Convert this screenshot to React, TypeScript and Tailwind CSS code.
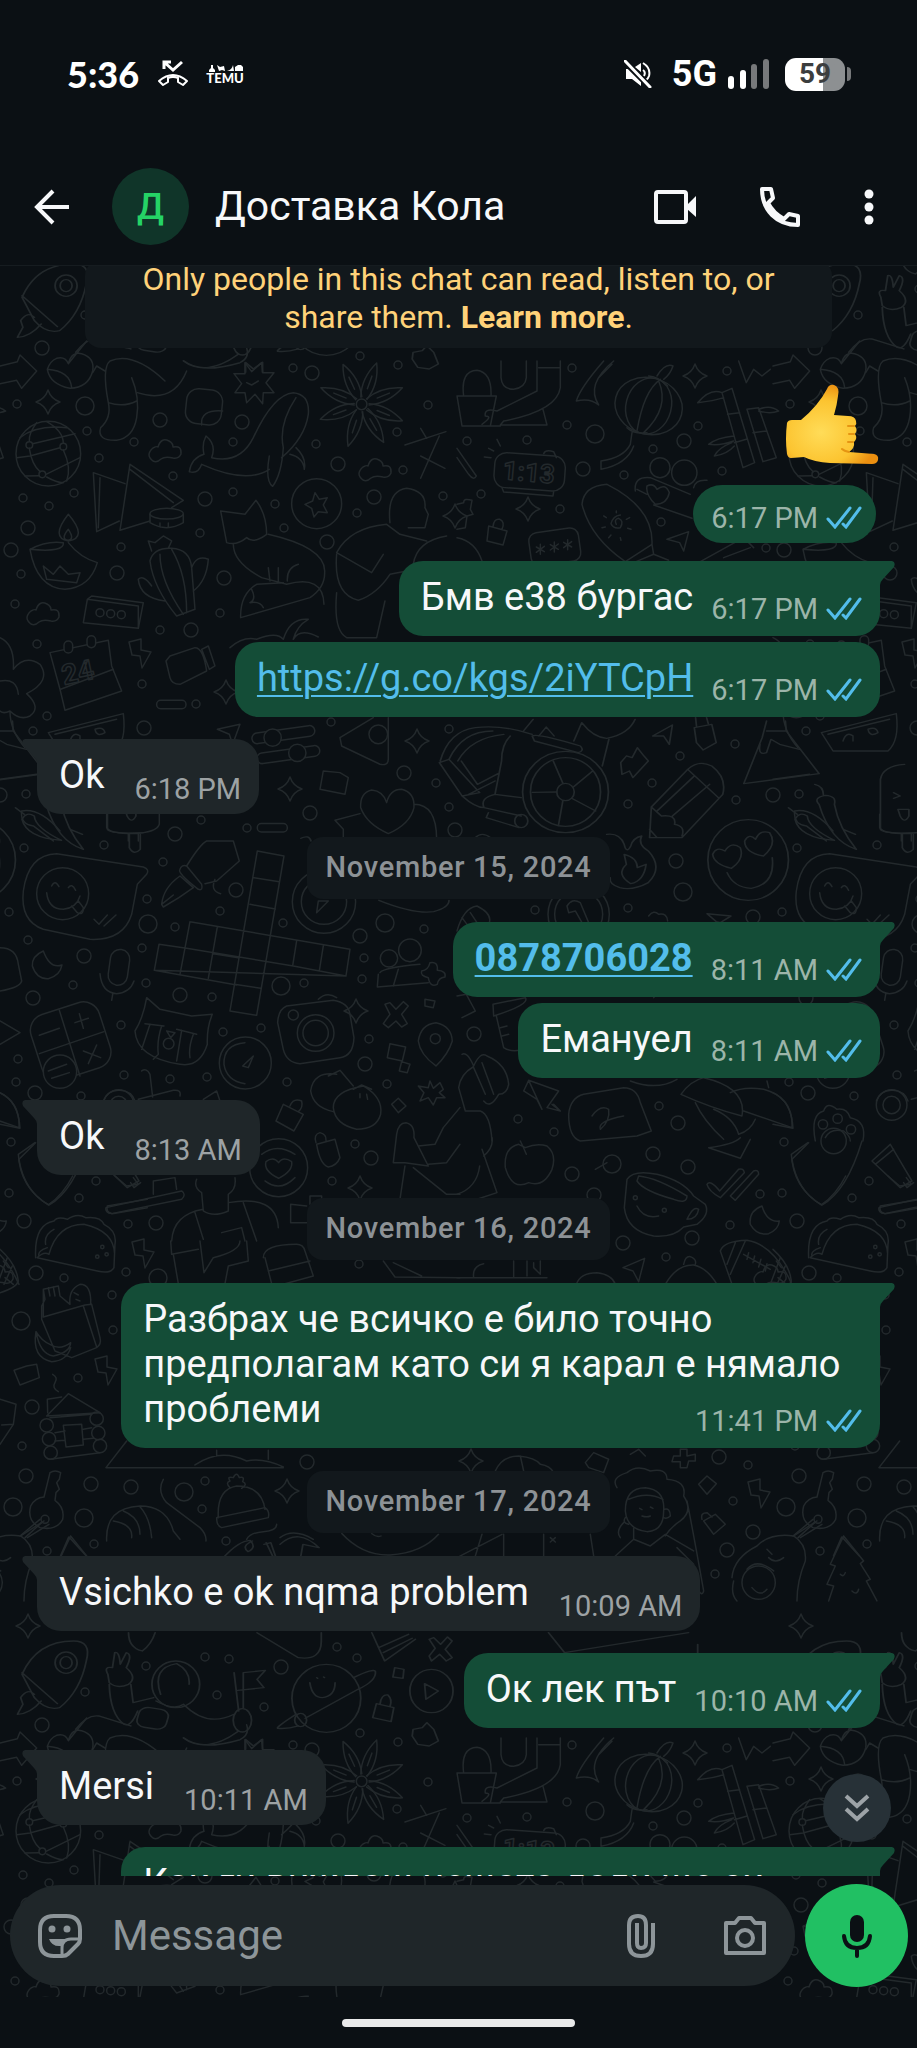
import { useState } from "react";
import type { ReactNode } from "react";

type Message = {
  id: number;
  from: "me" | "them";
  time: string;
  content: ReactNode;
  tail?: boolean;
  long?: boolean;
};

type Day = {
  date?: string;
  messages: Message[];
};

const days: Day[] = [
  {
    messages: [
      { id: 1, from: "me", time: "6:17 PM", content: "Бмв е38 бургас", tail: true },
      {
        id: 2,
        from: "me",
        time: "6:17 PM",
        content: (
          <a href="https://g.co/kgs/2iYTCpH" className="text-[#53bdeb] underline decoration-2 underline-offset-4">
            https://g.co/kgs/2iYTCpH
          </a>
        ),
      },
      { id: 3, from: "them", time: "6:18 PM", content: "Ok", tail: true },
    ],
  },
  {
    date: "November 15, 2024",
    messages: [
      {
        id: 4,
        from: "me",
        time: "8:11 AM",
        tail: true,
        content: (
          <a href="tel:0878706028" className="font-bold text-[#53bdeb] underline decoration-2 underline-offset-4">
            0878706028
          </a>
        ),
      },
      { id: 5, from: "me", time: "8:11 AM", content: "Емануел" },
      { id: 6, from: "them", time: "8:13 AM", content: "Ok", tail: true },
    ],
  },
  {
    date: "November 16, 2024",
    messages: [
      {
        id: 7,
        from: "me",
        time: "11:41 PM",
        content: "Разбрах че всичко е било точно предполагам като си я карал е нямало проблеми",
        tail: true,
        long: true,
      },
    ],
  },
  {
    date: "November 17, 2024",
    messages: [
      { id: 8, from: "them", time: "10:09 AM", content: "Vsichko e ok nqma problem", tail: true },
      { id: 9, from: "me", time: "10:10 AM", content: "Ок лек път", tail: true },
      { id: 10, from: "them", time: "10:11 AM", content: "Mersi", tail: true },
      { id: 11, from: "me", time: "10:12 AM", content: "Как ги виждаш нещата дали ще си", tail: true, long: true },
    ],
  },
];

/* Wallpaper */

const smallDots = [
  [17, 403], [87, 430], [134, 441], [99, 457], [173, 475], [233, 441], [293, 367], [360, 355], [398, 364],
  [428, 404], [397, 431], [316, 443], [403, 469], [23, 497], [74, 492], [49, 505], [233, 491], [275, 503],
  [357, 512], [443, 495], [200, 532], [284, 527], [121, 546], [21, 573], [15, 603], [220, 612], [160, 629],
  [37, 643], [142, 683], [196, 703], [47, 715], [33, 730], [331, 721], [449, 728], [436, 782], [247, 827],
  [26, 793], [201, 819], [24, 847], [104, 844], [163, 861], [147, 898], [220, 910], [175, 926], [9, 911],
  [28, 939], [142, 947], [73, 984], [146, 982], [212, 996], [121, 1024], [223, 1031], [261, 1027], [304, 982],
  [283, 922], [424, 928], [364, 957], [362, 978], [369, 1038], [387, 1083], [287, 1081], [207, 1076],
  [170, 1078], [124, 1074], [81, 1095], [18, 1058], [16, 1081], [11, 1141], [9, 1192], [96, 1180], [79, 1197],
  [128, 1223], [355, 1143], [332, 1180], [572, 367], [567, 424], [527, 439], [467, 440], [653, 448],
  [698, 425], [727, 370], [624, 474], [722, 470], [481, 493], [560, 508], [661, 521], [766, 547], [535, 909],
  [628, 907], [659, 1105], [518, 1118], [554, 1131], [760, 1193], [730, 1224], [666, 1256], [748, 1464],
  [733, 1500], [715, 1573], [64, 1277], [126, 1271], [112, 1294], [113, 1329], [78, 1377], [22, 1445],
  [205, 1480], [202, 1508], [359, 1263], [47, 1550], [94, 1543], [226, 1540], [205, 1656], [229, 1658],
  [337, 1646], [357, 1657], [217, 1694], [264, 1706], [85, 1691], [146, 1665], [449, 806], [628, 803],
  [652, 782], [680, 755], [735, 743], [736, 799],
];

const mediumDots = [
  [42, 347], [160, 419], [242, 421], [312, 372], [338, 463], [205, 498], [374, 496], [28, 527], [327, 541],
  [11, 549], [117, 572], [224, 577], [191, 629], [144, 727], [404, 772], [310, 812], [175, 833], [236, 889],
  [84, 955], [180, 994], [33, 997], [360, 935], [365, 1063], [35, 1092], [24, 1220], [156, 1222], [371, 1157],
  [684, 440], [583, 468], [753, 916], [678, 1122], [572, 1173], [653, 1153], [688, 1166], [594, 1194],
  [623, 1242], [692, 1237], [719, 1456], [753, 1531], [727, 1549], [36, 1272], [32, 1406], [26, 1475],
  [91, 1483], [131, 1486], [307, 1461], [281, 1666], [455, 829], [676, 860], [773, 794], [474, 1033],
];

const bigDots = [
  [85, 405], [148, 923], [281, 985], [385, 922], [595, 433], [683, 891], [612, 1163], [158, 1277], [21, 1320],
  [13, 1506], [84, 1517], [184, 1491],
];

const sparkles = [
  [48, 401], [528, 508], [695, 375], [226, 691], [417, 740], [290, 788], [356, 1010], [360, 1187], [287, 1490],
  [471, 1460], [28, 1625], [455, 515],
];

const clouds = [
  [165, 450], [375, 469], [43, 613], [770, 1275],
];

const bolts = [
  [140, 651], [143, 1251], [106, 1368], [759, 1491],
];

const petals = [20, 68, 112, 150, 198, 250, 292, 335];

function Doodles() {
  return (
    <g id="doodles" fill="none" stroke="#23292c" strokeLinecap="round" strokeLinejoin="round" strokeWidth="1.5">
      {smallDots.map(([x, y]) => (
        <circle key={`${x}-${y}`} cx={x} cy={y} r="4" />
      ))}
      {mediumDots.map(([x, y]) => (
        <circle key={`${x}-${y}`} cx={x} cy={y} r="7" />
      ))}
      {bigDots.map(([x, y]) => (
        <circle key={`${x}-${y}`} cx={x} cy={y} r="9" />
      ))}
      {sparkles.map(([x, y]) => (
        <path key={`${x}-${y}`} transform={`translate(${x} ${y})`} d="M0-12Q3-3 12 0Q3 3 0 12Q-3 3-12 0Q-3-3 0-12Z" />
      ))}
      {clouds.map(([x, y]) => (
        <path
          key={`${x}-${y}`}
          transform={`translate(${x} ${y})`}
          d="M-12 10Q-20 4-12-3Q-8-5-7-4Q-4-14 4-10Q8-8 8-4Q17-6 16 3Q14 8 8 7Q0 5-4 8Q-8 12-12 10Z"
        />
      ))}
      {bolts.map(([x, y]) => (
        <path key={`${x}-${y}`} transform={`translate(${x} ${y})`} d="M-11-10 1-13 1-2 11 0 2 16 0 4-8 3Z" />
      ))}

      {/* globe, astronaut leg, whale, flower */}
      <g transform="translate(0 340) scale(0.3333)" strokeWidth="4.5">
        <circle cx="145" cy="338" r="97" />
        <circle cx="88" cy="312" r="10" />
        <circle cx="190" cy="317" r="10" />
        <circle cx="127" cy="400" r="10" />
        <path d="M60 290Q110 250 200 260M98 308 225 278M88 322Q95 370 120 392M180 320 90 345 50 350M190 327Q215 380 200 420M138 400 240 350M110 245Q85 280 88 300M140 242Q190 270 190 307M118 404 75 405M140 408Q170 425 190 425" />
        <path d="M142 85Q150 60 170 52Q195 45 205 68Q215 30 245 38Q285 50 278 90Q265 140 210 142Q150 130 142 85ZM142 85Q210 90 215 140M205 68 260 0" />
        <path d="M0 75 52 62 60 42 110 90 65 142 50 118 0 128" />
        <path d="M560 90Q520 190 412 155M395 110Q420 170 410 230Q400 290 350 298Q290 300 302 260Q335 230 325 185Q305 80 330 60Q400 30 495 120M325 185Q370 200 410 180M550 60Q600 100 720 65Q750 50 740 20M278 95 290 75 315 90" />
        <rect x="558" y="145" width="108" height="105" rx="35" transform="rotate(6 612 198)" />
        <path d="M605 252Q600 205 668 210" />
        <path d="M735 65 755 92 785 65 788 95 822 95 798 125 822 155 790 155 788 188 765 160 740 185 735 155 705 155 725 128 702 98 735 98ZM740 125 755 132 775 120" />
        <path d="M568 392Q575 350 612 340Q605 310 618 285Q650 310 635 350Q720 370 760 290Q820 160 880 155Q930 160 925 220Q915 290 845 350M568 392Q595 400 605 370Q740 430 808 385M808 345Q795 420 818 436Q845 400 850 320Q835 250 888 170M870 340Q910 350 913 385Q920 350 888 320" />
        <circle cx="1085" cy="190" r="16" />
        {petals.map((angle) => (
          <path
            key={angle}
            transform={`translate(1085 190) rotate(${angle})`}
            d="M-10-20Q-28-75 0-132Q28-75 10-20M0-50V-90"
          />
        ))}
        <path d="M1215 312 1338 272M1262 262 1280 292M1318 285 1262 412M1262 345 1335 382" />
        <path d="M280 395 375 428M280 395 290 572 358 540M390 370 360 568 450 540M390 370 550 478 515 500M390 385 520 485M300 410 295 560" />
        <ellipse cx="500" cy="518" rx="50" ry="16" />
        <path d="M450 520V545Q500 575 550 545V520M480 546V558M505 546V558" />
        <path d="M90 625Q140 598 190 605Q195 635 90 625Q110 740 195 745Q270 740 292 665Q240 650 205 605M205 520Q150 590 205 600Q265 590 205 520ZM205 565Q180 595 205 598Q225 595 205 565ZM130 675 140 715 230 725 240 695 205 700 180 675 160 700Z" />
        <path d="M450 660Q460 620 515 622Q570 625 575 680L585 805 530 825Q460 740 450 660ZM480 640Q480 720 550 820M515 625Q560 700 560 815M575 680Q590 640 625 655Q620 720 580 750M455 735Q430 700 415 715Q420 770 495 780M455 630 445 600 465 605 490 585 515 600 505 622" />
        <circle cx="950" cy="488" r="75" />
        <path d="M945 455 958 475 982 470 970 492 982 515 955 512 942 528 935 502 915 490 938 480Z" />
        <path d="M662 510 735 520 768 478Q800 520 800 580Q760 610 740 590Q710 615 680 605ZM700 610Q700 665 785 710L860 730Q970 700 972 790M805 580Q980 620 974 695Q975 740 930 770L722 830Q720 760 770 730L850 725M755 745Q770 775 750 785 780 780 790 800M805 680 810 720M835 680 835 720M862 720Q860 680 895 670" />
        <path d="M1010 635Q1050 560 1160 550L1200 580 1280 600M1010 635 1115 695 1150 640M1170 545Q1160 450 1220 442Q1280 450 1275 500L1285 520 1275 560 1225 560M1010 640Q1000 760 1075 778Q1130 760 1170 700L1220 690M1010 755Q1000 870 1040 890L1130 890 1155 780M1240 670Q1250 600 1340 585" />
        <path d="M262 775 275 765 430 785 415 862 250 845ZM262 775 415 795 415 862" />
        <circle cx="300" cy="815" r="12" />
        <circle cx="332" cy="818" r="12" />
        <circle cx="364" cy="821" r="12" />
        <path d="M150 935 325 898 335 975 365 1050 195 1108 180 1045ZM182 1045 340 985" />
        <rect x="192" y="900" width="26" height="36" rx="13" fill="#0b1014" />
        <rect x="261" y="884" width="26" height="36" rx="13" fill="#0b1014" />
        <path d="M510 945 585 920Q610 920 620 990L540 1030Q515 1030 510 1010L498 960ZM605 925 625 915 645 975 628 985Z" />
        <rect x="470" y="1078" width="88" height="25" rx="12" />
        <rect x="772" y="1448" width="90" height="25" rx="12" />
        <path d="M145 1175 370 1118Q380 1200 345 1230L180 1230ZM165 1180 350 1135M210 1200Q220 1170 240 1185V1200M285 1165Q310 1155 315 1175 290 1190 285 1165" />
        <path d="M652 1165 720 1150 698 1210 688 1180Z" />
        <rect x="755" y="1165" width="190" height="32" rx="16" transform="rotate(-8 850 1180)" />
        <rect x="770" y="1225" width="190" height="32" rx="16" transform="rotate(-8 865 1240)" />
        <circle cx="818" cy="1190" r="26" fill="#0b1014" />
        <circle cx="892" cy="1236" r="26" fill="#0b1014" />
        <path d="M1120 1130 1020 1190 1025 1215 1140 1270Q1165 1275 1165 1255V1130" />
        <circle cx="1135" cy="1180" r="28" />
        <path d="M970 1290 1020 1295 1045 1310 1035 1360 960 1345Z" />
        <path d="M1160 1385Q1170 1345 1205 1345Q1245 1355 1242 1400 1230 1450 1165 1478 1100 1450 1082 1400 1080 1355 1115 1347 1150 1350 1160 1385ZM1242 1390Q1310 1390 1310 1495M1080 1418 1005 1438 1030 1465V1495" />
        <path d="M0 890Q45 910 40 985 75 940 120 970 155 1020 80 1058 125 1100 90 1125 60 1140 30 1110 10 1120 0 1110M0 1020Q50 1010 55 1060M30 1110Q30 1170 75 1220M0 1315 110 1300" />
        <path d="M320 1420V1460Q330 1478 400 1478 470 1475 478 1450V1420M385 1478V1500M415 1478V1500M65 1410Q60 1450 100 1455L160 1500M65 1410Q120 1400 180 1470" />
        <path d="M690 920Q730 885 770 895 830 870 850 895 870 830 925 835 890 855 880 895 900 860 955 888" />
      </g>

      {/* gardener, lantern, bamboo, alarm clock, surfboard */}
      <g transform="translate(457 360) scale(0.3333)" strokeWidth="4.5">
        <path d="M0 105H118L100 195H15ZM20 105Q10 30 60 28 105 35 102 105M132 0V50Q135 85 170 85 205 80 208 50V0M240 0V90L120 150Q80 140 85 165 110 165 75 190M310 0V80Q300 150 140 180L130 192H270L258 145M245 20H308M15 195H130" />
        <path d="M440 0Q370 80 358 120 400 110 425 132 385 70 470 0M425 50 465 10" />
        <ellipse cx="575" cy="135" rx="102" ry="85" transform="rotate(15 575 135)" />
        <ellipse cx="575" cy="135" rx="68" ry="85" transform="rotate(15 575 135)" />
        <path d="M610 55Q560 90 540 210M605 60Q640 140 560 215M575 45Q600 45 632 75M600 45Q625 5 648 15 640 40 620 55M510 200Q530 220 570 215M525 215 520 250Q500 290 432 300V325Q510 310 530 255" />
        <path d="M795 95 825 82 893 305 858 320ZM812 160 848 155M832 245 868 235M870 145 905 140 958 290 918 302ZM888 215 930 210M795 95Q760 80 722 125 770 120 800 110M905 145Q940 130 965 150 940 160 905 150M830 225Q780 230 755 250 790 255 830 240M825 245Q785 260 772 285 810 280 832 255" />
        <path d="M845 0 868 65 890 25 915 45 940 25" />
        <rect x="112" y="280" width="212" height="105" rx="35" transform="rotate(4 218 332)" />
        <path d="M135 380 140 393 288 405 290 392M260 278Q265 265 290 272L298 290M120 235 130 255M95 262 110 270M82 288 102 290M0 262 58 345Q50 360 35 340L0 290" />
        <path d="M375 430Q380 375 450 370 590 440 585 550L505 602Q400 530 375 430ZM585 550 590 580 530 605M590 580 635 598" />
        <path d="M478 490Q470 475 485 472 502 480 490 500 470 505 462 488 468 465 490 462M478 450V455M440 465 448 470M435 500 445 498M455 530 462 522M492 538 490 530M522 505 512 502M518 470 508 475" />
        <circle cx="609" cy="320" r="30" />
        <circle cx="682" cy="335" r="38" />
        <path d="M535 390Q530 345 580 350L700 400M540 385 570 400M600 385Q625 365 637 395 630 430 595 430 565 400 570 375 590 365 600 385ZM590 432 705 472M710 380Q715 355 750 358" />
        <path d="M95 495 150 510 138 552 90 540ZM108 497Q110 472 128 475 145 482 135 505" />
        <rect x="218" y="508" width="150" height="100" rx="25" transform="rotate(-8 290 555)" />
        <path d="M250 550V580M238 558 262 572M262 556 238 574M292 543V573M280 551 304 565M304 549 280 567M332 536V566M320 544 344 558M344 542 320 560" />
        <path d="M0 430 20 425Q20 410 45 418L40 445 48 460 30 465 25 500 0 505M0 530Q55 540 75 600M630 535 695 512 680 570 668 545ZM730 602 860 530 890 560M800 590 880 560" />
      </g>

      {/* chat bubble, pen, crossword, calculator, cat, cameras */}
      <g transform="translate(0 840) scale(0.3333)" strokeWidth="4.5">
        <path d="M170 38 430 78Q450 85 440 100L412 130 395 220Q370 300 270 295L130 265Q60 240 70 150 85 40 170 38Z" />
        <circle cx="188" cy="158" r="78" />
        <path d="M140 155Q145 205 190 205 230 200 240 165M155 135Q165 115 177 137M205 140Q215 125 227 148M215 195 232 215Q250 225 250 200L235 180M282 235 297 250 322 222M312 255 348 222" />
        <path d="M485 190Q490 140 540 105L580 140Q540 170 490 198ZM540 85Q530 95 595 145 610 150 605 130L560 75Q545 70 540 85ZM560 75Q600 10 620 0H700L718 60 650 120 615 128M485 190 520 162M645 115Q630 150 662 158" />
        {/* crossword grid */}
        <path d="M772 30 852 45 770 523 690 510ZM762 110 838 122M750 190 826 204M570 242 1050 325 1038 405 463 388 477 310 560 322M570 242 540 400M652 258 625 412M890 300 878 375M970 315 958 390M715 350 640 338M703 430 782 442M463 388 710 432M560 322 880 375 1038 405" />
        <path d="M130 330Q95 345 97 375 110 415 145 413 180 405 186 372 150 385 130 330Z" />
        <rect x="328" y="325" width="58" height="108" rx="29" transform="rotate(8 357 378)" />
        <path d="M300 398Q305 455 350 458 390 455 402 420M338 460 335 478" />
        <rect x="105" y="498" width="215" height="205" rx="50" transform="rotate(-18 212 602)" />
        <path d="M178 508 240 705M118 638 312 572M118 583 178 562M225 545 265 532M238 518 250 562M250 630 302 650M290 612 265 668" />
        <circle cx="180" cy="692" r="50" fill="#0b1014" />
        <path d="M145 690 200 670M155 712 208 695" />
        <path d="M440 470 480 505 575 525 637 520Q620 560 622 610 600 680 540 670 410 650 405 570 430 530 440 470ZM435 548 492 555M450 550 425 625M485 555Q470 600 475 640L460 655M530 565 590 580M545 568 530 660M580 580Q565 620 570 650M500 570 525 575 512 590Z" />
        <circle cx="506" cy="608" r="16" />
        <circle cx="736" cy="666" r="78" />
        <path d="M735 605Q670 610 672 670 680 720 735 728M728 675 760 645 745 680Z" />
        <circle cx="972" cy="182" r="95" />
        <circle cx="972" cy="182" r="68" />
        <path d="M950 215 955 180 985 180Z" />
        <path d="M860 495 1000 478Q1045 485 1050 520L1062 590Q1060 645 1020 650L900 668Q860 665 850 625L833 545Q835 505 860 495ZM955 475Q980 450 1010 470" />
        <circle cx="947" cy="576" r="55" />
        <circle cx="947" cy="576" r="38" />
        <circle cx="880" cy="522" r="15" />
        <circle cx="1167" cy="352" r="26" />
        <circle cx="1230" cy="328" r="34" />
        <path d="M1140 395Q1150 380 1260 370M1135 400 1132 438 1285 425M1195 385 1180 435M1290 365Q1315 360 1312 388 1340 390 1335 408 1315 410 1312 430 1290 440 1285 410 1260 405 1265 390 1285 388 1290 365Z" />
        <path d="M1155 490 1170 485 1188 505 1210 482 1225 495 1205 520 1222 548 1205 558 1188 540 1165 560 1150 548 1170 520ZM1275 475 1305 480 1300 500 1275 495Z" />
        <path d="M1308 545Q1355 555 1357 600 1345 640 1308 675 1260 640 1255 600 1262 550 1308 545Z" />
        <circle cx="1306" cy="593" r="15" />
        <path d="M1170 608 1217 618 1207 660 1162 650ZM1205 662 1230 670 1222 695 1198 690ZM1290 720 1300 742 1320 725 1330 745 1318 755 1335 770 1310 770 1300 792 1285 770 1260 780 1272 755 1255 735 1285 740Z" />
        <path d="M1010 700Q940 690 932 750 940 800 1000 812M985 705 1020 688 1060 735M1000 800Q1000 750 1090 735 1150 770 1142 820 1130 865 1070 865 1005 850 1000 800ZM1060 745 1085 732 1115 745M1080 758V770M1100 760 1103 775" />
        <path d="M850 790 910 820 882 870 828 840ZM870 795Q880 770 905 780 910 800 895 812M1175 790 1195 772 1218 795 1195 815ZM950 910 1005 895 1020 950Q1010 975 985 978 960 970 950 910ZM948 905Q940 880 960 875 980 880 978 898" />
        <circle cx="836" cy="980" r="87" />
        <path d="M836 965Q850 945 875 962 880 990 836 1012 790 990 798 962 820 945 836 965ZM785 940Q830 905 885 940M795 1020Q840 1055 885 1010" />
        <path d="M425 690Q440 680 450 700L458 768M415 775 520 748Q545 745 540 765M310 780Q325 745 360 748 395 750 405 780M610 775 650 750 660 780" />
        <path d="M318 1100 545 1050Q560 1060 545 1075L335 1118Q315 1115 318 1100ZM460 1060V1020L525 1010 530 1045M345 1005 380 1035 415 1030 400 1010M55 940Q60 1040 145 1092 190 1060 218 1005M55 940 105 905M0 755Q55 780 60 862L0 850" />
        <path d="M590 1015Q580 1040 605 1055L610 1110Q640 1130 685 1110V1060Q710 1045 705 1010M515 1200Q520 1120 610 1105M685 1085Q830 1060 835 1160M585 1115 610 1195M730 1085 770 1200M665 1175 725 1160 735 1200" />
        <path d="M872 1090 920 1095M872 1090V1145H920M930 1090V1065H965V1078" />
        <path d="M1190 880Q1195 845 1218 845 1245 850 1242 890L1285 975 1215 965 1180 965ZM1255 915 1305 910 1330 860 1380 800M1285 970 1340 965 1380 910M1240 980 1340 1060 1380 1060M1200 1075 1215 975" />
        <path d="M0 540 60 575 0 610M0 320Q50 320 55 370L65 420Q60 440 0 450" />
      </g>

      {/* number one medal, mushrooms, speech note, paw */}
      <g transform="translate(457 880) scale(0.3333)" strokeWidth="4.5">
        <circle cx="365" cy="100" r="92" />
        <circle cx="365" cy="100" r="72" />
        <path d="M330 75Q345 50 370 65L395 125H375L355 90 335 95ZM0 150Q20 80 60 75 110 100 95 130M15 110 30 130M40 95 60 125" />
        <path d="M750 98 822 105 790 125 778 122ZM575 105Q590 85 605 100 630 95 632 120M0 345 28 340 55 390 15 410M108 370 205 350Q220 370 110 405ZM118 405 140 500Q160 515 205 505M130 440 150 435M135 465 155 460" />
        <path d="M15 520Q30 510 50 555 70 510 90 525 150 550 155 610 150 640 125 640 100 685 80 660M48 558Q10 580 5 620L25 690 70 690Q100 700 105 780M50 560 85 640M75 545 110 640" />
        <path d="M215 598 305 630 270 680 310 690M215 598 200 630 240 655 255 685ZM285 670 310 690 290 670" />
        <path d="M380 640 500 620Q540 620 550 665L583 750 540 765 370 780Q335 770 335 700 340 650 380 640ZM405 705Q430 670 455 685 460 720 430 745 420 720 500 705" />
        <path d="M672 640Q700 600 740 590 870 620 855 705 760 680 672 640ZM820 635Q860 615 920 625 1010 650 1005 740L860 690M715 665Q740 720 800 775M770 685Q830 710 845 760 880 750 895 715M520 600Q600 630 660 595M930 600 935 620M590 350Q620 310 680 345" />
        <path d="M1075 780Q1060 700 1100 690 1110 660 1140 685 1170 680 1180 710 1230 720 1218 780M1105 770Q1120 740 1160 750 1180 765 1180 780" />
        <circle cx="1098" cy="730" r="14" />
        <circle cx="1142" cy="713" r="14" />
        <circle cx="1182" cy="745" r="14" />
        <circle cx="1304" cy="672" r="46" />
        <circle cx="1304" cy="672" r="26" />
      </g>

      {/* apple, cup, rugby ball, tacos, curly hair */}
      <g transform="translate(457 1140) scale(0.3333)" strokeWidth="4.5">
        <path d="M205 20Q240 5 270 15 300 40 285 85 260 140 215 125 165 150 145 80 140 20 185 10ZM190 0Q200 20 208 40M0 160Q60 140 68 75M75 25 120 155 60 175M80 45Q110 20 105-10" />
        <path d="M510 115Q530 85 600 100 680 120 710 165L745 190Q760 220 720 250L680 258Q650 290 590 285 510 270 502 200ZM545 105Q600 110 690 165 690 190 650 175 560 150 540 120ZM695 225Q710 195 725 205 720 235 690 235ZM540 195Q560 235 605 225M415 85 450 65" />
        <circle cx="535" cy="170" r="6" />
        <circle cx="622" cy="208" r="6" />
        <path d="M750 130Q760 115 788 150L845 85Q860 80 862 95L790 170Q755 150 750 130ZM820 165 890 90Q905 85 905 100L835 178ZM755 20Q830 10 850-10M755 20 850 52 880-5" />
        <path d="M915 195Q875 210 880 250 900 285 935 278 965 265 967 240 930 245 915 195Z" />
        <path d="M790 330Q800 300 870 298 950 310 1005 430M790 330 825 430M835 305 810 370M865 300 820 400M940 430 970 350M960 430 985 375M860 340 940 385M875 335 870 355M893 345 888 365M912 355 905 378M930 368 925 390" />
        <path d="M1005 55Q1020 150 1095 192 1170 150 1215 0M1005 55 1055 5M1245 60 1300 10 1365 120 1330 140ZM1255 70 1310 25M1340 125 1350 140 1370 125M1270 195 1390 175M1270 195Q1265 215 1285 218L1390 200" />
        <circle cx="1130" cy="0" r="38" />
        <path d="M1055 350Q1050 250 1110 240 1120 225 1150 235 1180 215 1205 230 1250 225 1260 250 1300 270 1293 310L1290 380Q1280 400 1240 390L1060 350Q1080 330 1095 340 1120 250 1200 250 1290 270 1292 340M1085 310Q1080 280 1110 265M1065 345Q1060 330 1090 320" />
        <circle cx="1255" cy="318" r="5" />
        <circle cx="1240" cy="347" r="5" />
        <circle cx="1268" cy="340" r="5" />
        <path d="M498 380 563 352 545 422 528 390ZM358 430Q370 395 420 395 465 400 475 430M625 430Q660 370 710 372 750 380 780 430M680 370Q685 345 700 347 720 355 715 370M0 410H270M50 410Q45 375 80 368M170 360V410M210 360V405M230 365V380L250 400V360" />
        <path d="M115 990Q135 945 185 945 235 950 250 970 280 975 290 995M190 945 200 990M385 965 410 935 455 955 440 995 395 980ZM650 945H670V925H690V945L715 940V960H695L690 980H670V962H645ZM520 940 545 925 565 945" />
        <path d="M480 1040Q460 1010 510 995 540 970 580 990 630 980 630 1015 690 1020 680 1065 710 1110 670 1140 640 1160 625 1185M500 1145Q475 1170 490 1190M505 1110Q505 1040 565 1040 625 1045 620 1110 620 1170 570 1172 510 1165 505 1110ZM505 1130Q495 1145 515 1150M622 1105Q640 1100 640 1125 630 1135 620 1130M515 1075Q570 1050 618 1075M475 1245 530 1195 580 1215 625 1180 710 1230M690 1080Q710 1180 740 1350 735 1370 720 1340M530 1160 530 1195M660 1220 710 1270" />
        <path d="M548 1102 555 1106M580 1098 588 1102M555 1125Q570 1130 580 1125" />
        <path d="M725 1030 750 1005 778 1028 750 1060ZM740 1140 775 1120 805 1150 770 1180ZM735 1135Q730 1115 750 1115L765 1128" />
        <path d="M825 1310Q830 1250 900 1215 940 1175 1010 1185 1050 1210 1045 1260 1020 1320 1020 1380M830 1320Q820 1360 840 1380" />
        <circle cx="905" cy="1325" r="50" />
        <path d="M870 1285Q900 1250 950 1290M885 1340Q910 1370 930 1345M930 1225 945 1240M935 1250Q955 1270 980 1250M1010 1185 1080 1140M1030 1190 1095 1150" />
        <path d="M1160 1185 1120 1270 1135 1275 1110 1330 1130 1335 1115 1380M1160 1185 1220 1260 1210 1268 1240 1315 1228 1320 1260 1380M1150 1300Q1160 1310 1165 1295M1185 1350Q1200 1365 1205 1345" />
        <path d="M0 1250 135 1180M55 1245 75 1180M140 1180 140 1245M260 1245V1180M400 1180 410 1245M280 1190 295 1203M295 1190 280 1203" />
      </g>

      {/* grocery bag, log house, key, beanie, croissant */}
      <g transform="translate(0 1240) scale(0.3333)" strokeWidth="4.5">
        <path d="M512 0 515 40 595 25M520 40 535 128M600 0 612 95 640 50Q720 30 720 0M740 0 745 60 685 75 675 128M790 50Q790 10 890 10 910 10 915 30L940 105 855 128M795 50 815 128M805 90 930 60M1150 60 1185 108 1380 110M1180 65 1265 105" />
        <path d="M130 145 175 135 180 165 210 190M130 145 135 175 125 195 125 235 165 330 215 350 290 320Q305 310 300 290L275 190 255 192 130 228ZM145 140 150 165M160 138 165 165M210 190Q205 145 240 130 275 130 272 190M222 155 235 162M228 175 240 180M250 195 290 318M108 272Q120 340 160 345 210 335 212 305 180 330 150 310 125 300 108 272Q95 350 155 362 200 360 212 320" />
        <path d="M42 388 80 375 110 370 118 410 60 432ZM158 400Q175 410 165 425 155 440 175 452" />
        <path d="M140 525 205 458 300 515ZM143 515 142 475 185 468M150 530 275 520M165 575 195 570M165 600 195 598M250 565 275 560M250 595 280 592M150 655 300 635M190 553 245 550 250 612 198 618Z" />
        <circle cx="140" cy="553" r="20" />
        <circle cx="290" cy="533" r="20" />
        <circle cx="147" cy="594" r="20" />
        <circle cx="295" cy="576" r="20" />
        <circle cx="152" cy="635" r="20" />
        <circle cx="300" cy="615" r="20" />
        <path d="M0 475 48 490 40 550 5 552M40 550 0 610M0 25Q50 70 55 120 50 140 0 155M10 60 25 80M15 110 40 130" />
        <path d="M380 600 318 680H850M585 672Q660 620 740 660 790 650 850 678M650 628V645M805 628V655" />
        <path d="M150 695Q165 685 182 695L178 715 170 725 178 745 168 755 165 778Q195 800 188 835 170 870 120 860 80 840 92 795 105 770 132 768ZM125 845 75 890M120 835 60 885" />
        <circle cx="135" cy="835" r="12" />
        <path d="M655 830Q650 745 710 735 785 735 795 805M650 830 795 800Q810 810 805 830L665 860Q650 855 650 830ZM690 740Q675 725 690 720 680 705 700 710 710 690 718 710 735 705 728 722 745 730 725 742" />
        <path d="M320 900Q315 800 420 795 500 795 520 870L540 895M340 840Q400 850 395 890M370 810Q420 830 420 880M420 797Q450 830 455 890M490 715Q470 750 500 785L600 860Q620 880 618 900M740 895Q750 875 790 872 830 870 830 850M840 890Q880 860 940 895" />
      </g>

      {/* wheelchair, pencil, heart eyes, peppers */}
      <g transform="translate(230 700) scale(0.438 0.3333)" strokeWidth="4">
        <ellipse cx="766" cy="273" rx="98" ry="122" />
        <ellipse cx="766" cy="273" rx="80" ry="103" />
        <ellipse cx="766" cy="273" rx="20" ry="26" />
        <path d="M760 247 738 180M784 258 828 210M780 292 835 330M760 299 750 372M746 273 690 274M690 105Q700 95 800 135 810 150 795 155L695 120ZM480 180Q500 90 560 80 620 70 690 100M500 175Q530 90 600 90M520 180Q550 110 625 100M478 185 500 175 570 275 530 285ZM528 180 565 250 612 218M530 285Q560 320 580 320M545 280 605 240M640 105Q620 130 620 180L605 280 665 290M605 280Q570 290 580 320L665 345M590 335 585 350 660 380M670 90 692 55M705 105 722 78 740 105M785 120 803 65Q830 110 860 112 910 100 925 55M865 115 850 195" />
        <ellipse cx="665" cy="360" rx="15" ry="20" />
        <path d="M962 318 1045 205Q1070 175 1100 195 1135 230 1125 280L1032 410H958ZM1045 205 1115 290M975 330 1060 225M1010 345 1095 250M962 318 985 345Q1020 340 1015 370 1040 375 1032 405M958 385 975 410" />
        <path d="M965 105 1010 72 1003 130 990 105ZM1060 80 1100 70 1110 125 1080 147 1065 125ZM1065 75 1063 50M1092 68 1088 50M930 140 945 165 955 180 920 230 912 210 895 220 892 185 905 165 918 170Z" />
        <path d="M1225 60 1215 110 1173 248 1345 218 1270 90 1268 60M1225 90H1268M1210 130Q1205 165 1225 155L1235 115 1255 130 1300 145" />
        <ellipse cx="1183" cy="477" rx="92" ry="121" />
        <path d="M1130 450Q1145 420 1165 440 1175 475 1145 502 1105 490 1102 460 1110 435 1130 450ZM1200 415Q1210 385 1232 395 1250 430 1218 465 1175 455 1175 420 1185 395 1200 415ZM1135 515Q1150 560 1190 562 1245 550 1238 470" />
        <path d="M1345 310Q1330 290 1360 283 1385 285 1380 310 1390 380 1430 445 1370 420 1345 310ZM1290 355Q1300 330 1318 345 1320 380 1380 418 1300 410 1290 355ZM1355 283Q1355 255 1335 250M1295 340 1275 320M1400 385 1428 400" />
        <path d="M1485 235Q1490 195 1540 190M1485 235V385Q1490 400 1568 395M1535 400V440Q1545 465 1560 445V400M1515 275 1530 285 1515 292M1525 325H1550V345Q1540 370 1530 345Z" />
        <path d="M860 400Q890 395 900 430 905 460 915 435 920 410 940 405 930 430 955 450 990 500 955 545 920 570 890 560 865 550 868 530M900 460Q930 470 930 500L950 490Q945 540 915 548 880 520 905 490Z" />
        <path d="M340 598Q420 640 465 632 500 620 500 598M162 412Q180 400 185 420M560 410Q575 390 595 410" />
      </g>

      {/* shrimp, rocket, astronaut, planet, play badge */}
      <g transform="translate(0 1480) scale(0.459 0.3333)" strokeWidth="4">
        <path d="M132 225 150 168 188 225M488 228Q520 180 545 178 560 200 540 212 525 195 550 180M580 185 595 228M575 190 590 185 600 225M610 190Q650 140 695 200L660 190 655 228M745 158Q790 225 850 222 920 215 955 160M810 158Q820 170 830 165" />
        <path d="M48 580Q80 480 160 480 200 480 188 540 175 630 130 680 100 690 75 650ZM48 575 125 668M75 640Q60 620 45 650L50 670 38 700Q65 700 90 660" />
        <ellipse cx="144" cy="545" rx="24" ry="32" />
        <ellipse cx="144" cy="545" rx="13" ry="18" />
        <path d="M235 580Q225 555 245 560L250 515Q260 510 262 550L275 515Q290 520 275 560 300 590 280 610 255 625 238 605ZM238 610Q240 700 270 730 285 740 300 690M285 610 290 665 335 650" />
        <ellipse cx="383" cy="610" rx="52" ry="70" />
        <path d="M350 640Q330 560 385 548 415 570 412 610M340 660Q380 690 400 670 450 740 510 700M400 770Q450 820 520 750M530 680V575L578 568 560 595 575 620 518 628M510 575 520 690" />
        <rect x="300" y="682" width="65" height="60" rx="20" transform="rotate(12 332 712)" />
        <ellipse cx="528" cy="718" rx="20" ry="35" />
        <ellipse cx="711" cy="652" rx="75" ry="102" />
        <path d="M770 590Q815 560 818 572 820 600 780 625L665 712M645 700Q600 740 605 742 625 745 650 735M675 605Q680 650 702 650 730 645 730 605M690 590 692 592M705 588 707 590" />
        <ellipse cx="655" cy="717" rx="13" ry="20" />
        <ellipse cx="940" cy="630" rx="47" ry="65" />
        <path d="M925 608 955 630 928 655ZM860 560 880 565 878 592 856 588ZM820 668 858 680 852 722 812 710ZM828 670Q830 640 845 642 855 655 850 675M935 475 945 470 960 490 975 468 985 480 970 505 985 530 972 540 958 520 940 540 935 525 948 502ZM810 455 838 540 905 475M825 500 890 460M835 515 898 472" />
        <path d="M900 745 920 740 930 725 945 745 955 780 935 795 910 790 898 765ZM280 455Q280 500 310 510 330 490 338 455M560 455 650 530Q700 540 700 480V455M1195 455 1230 515 1500 455M1520 490V520M535 805V775L552 795 572 775V805" />
        <path d="M165 745Q190 700 215 705L285 735" />
      </g>

      <g fontFamily="Roboto, sans-serif" fontWeight="700">
        <text x="64" y="684" fontSize="28" transform="rotate(-12 64 684)">24</text>
        <text x="502" y="478" fontSize="26" transform="rotate(5 502 478)">1:13</text>
      </g>
    </g>
  );
}

function Wallpaper() {
  return (
    <svg className="absolute inset-0 h-full w-full" aria-hidden="true">
      <defs>
        <Doodles />
      </defs>
      {/* The artwork repeats every 773 x 1377 */}
      {[-773, 0, 773].map((x) =>
        [-1642, -265, 1112].map((y) => <use key={`${x}${y}`} href="#doodles" x={x} y={y} />)
      )}
    </svg>
  );
}

/* Icons */

const MissedCallIcon = () => (
  <svg className="h-7 w-8" viewBox="0 0 32 28" fill="none" stroke="#fff" strokeWidth="3" aria-hidden="true">
    <path d="M7 2 16 10 25 2M7 9V2H14" />
    <path d="M2 21Q16 9 30 21L26 25 21 22V18Q16 16 11 18V22L6 25Z" strokeWidth="2" strokeLinejoin="round" />
  </svg>
);

const TemuIcon = () => (
  <div className="flex w-9 flex-col items-center">
    <svg className="h-2 w-9" viewBox="0 0 36 8" fill="#fff" aria-hidden="true">
      <path d="M2 8V6L4 4V1H6V4L8 6V8ZM10 1 13 3 17 2 18 7 15 6 12 7ZM20 7Q25 6 26 1L27 7ZM28 3 31 1H34L36 3V7H28Z" />
    </svg>
    <span className="font-[Lato] text-[13px] leading-3 font-black">TEMU</span>
  </div>
);

const MutedIcon = () => (
  <svg className="h-7 w-7" viewBox="0 0 28 28" aria-hidden="true">
    <path d="M2 9H7L17 19V26L8 19H2ZM11 7 17 3V12Z" fill="#fff" />
    <path d="M19 10Q22 12 20 16M19 3Q27 8 25 16 24 19 22 20" fill="none" stroke="#fff" strokeWidth="2" />
    <path d="M1 2 26 27" stroke="#0b1014" strokeWidth="6" />
    <path d="M1 1 26 27" stroke="#fff" strokeWidth="3" strokeLinecap="round" />
  </svg>
);

const SignalIcon = () => (
  <svg className="h-8 w-11" viewBox="0 0 44 32" aria-hidden="true">
    <rect x="1" y="18" width="6" height="13" rx="3" fill="#fff" />
    <rect x="13" y="12" width="6" height="19" rx="3" fill="#fff" />
    <rect x="24" y="6" width="6" height="25" rx="3" fill="#77797b" />
    <rect x="36" y="1" width="6" height="30" rx="3" fill="#77797b" />
  </svg>
);

const BackIcon = () => (
  <svg className="h-9 w-9" viewBox="0 0 36 36" fill="none" stroke="#f7f8fa" strokeWidth="4" aria-hidden="true">
    <path d="M35 18H4M19 2 3 18 19 34" />
  </svg>
);

const VideoIcon = () => (
  <svg className="h-9 w-11" viewBox="0 0 44 36" aria-hidden="true">
    <rect x="3" y="3" width="30" height="30" rx="2" fill="none" stroke="#f7f8fa" strokeWidth="4" />
    <path d="M34 16 43 7V28L34 20Z" fill="#f7f8fa" />
  </svg>
);

const PhoneIcon = () => (
  <svg className="h-10 w-10" viewBox="0 0 40 40" fill="none" stroke="#f7f8fa" strokeWidth="4" aria-hidden="true">
    <path d="M2 2H11L13 11 8 16Q13 26 24 32L29 27 38 29V38Q22 38 12 28 2 18 2 2Z" strokeLinejoin="round" />
  </svg>
);

const MenuIcon = () => (
  <svg className="h-9 w-3" viewBox="0 0 12 36" fill="#f7f8fa" aria-hidden="true">
    <circle cx="6" cy="5" r="4.5" />
    <circle cx="6" cy="18" r="4.5" />
    <circle cx="6" cy="31" r="4.5" />
  </svg>
);

const ChecksIcon = () => (
  <svg
    className="mb-1.5 h-6 w-9"
    viewBox="0 0 36 24"
    fill="none"
    stroke="#53bdeb"
    strokeWidth="3"
    strokeLinecap="round"
    aria-label="Read"
    role="img"
  >
    <path d="M2 14 9 22 24 3M17 19 20 22 34 3" />
  </svg>
);

const StickerIcon = () => (
  <svg className="h-11 w-11" viewBox="0 0 44 44" fill="none" stroke="#8d9599" strokeWidth="4" aria-hidden="true">
    <path d="M16 2H28Q42 2 42 16V25Q42 28 40 30L30 40Q28 42 24 42H16Q2 42 2 28V16Q2 2 16 2Z" />
    <path d="M24 42V34Q24 25 33 25H42" strokeWidth="3" />
    <circle cx="14" cy="15" r="3.5" fill="#8d9599" stroke="none" />
    <circle cx="29" cy="15" r="3.5" fill="#8d9599" stroke="none" />
    <path d="M11 25H33Q25 26 23 32 14 33 11 25Z" fill="#8d9599" stroke="none" />
  </svg>
);

const ClipIcon = () => (
  <svg className="h-11 w-7" viewBox="0 0 28 44" fill="none" stroke="#8d9599" strokeWidth="4" aria-hidden="true">
    <path d="M26 9V30Q26 42 14 42 2 42 2 30V11Q2 2 11 2 19 2 19 11V29Q19 34 14 34 10 34 10 29V9" />
  </svg>
);

const CameraIcon = () => (
  <svg className="h-10 w-11" viewBox="0 0 44 40" fill="none" stroke="#8d9599" strokeWidth="4" aria-hidden="true">
    <path d="M3 7H12L16 2H28L32 7H41V37H3Z" strokeLinejoin="round" />
    <circle cx="22" cy="22" r="8" />
  </svg>
);

const MicIcon = () => (
  <svg className="h-11 w-8" viewBox="0 0 32 44" fill="none" stroke="#0b1014" strokeWidth="4" aria-hidden="true">
    <rect x="9" y="1" width="14" height="27" rx="7" fill="#0b1014" stroke="none" />
    <path d="M3 22Q4 34 16 34 28 34 29 22M16 34V42" strokeLinecap="round" />
  </svg>
);

const CallMeHand = () => (
  <svg className="h-20 w-24" viewBox="0 0 96 80" role="img" aria-label="Call me hand">
    <defs>
      <radialGradient id="skin" cx="0.38" cy="0.6" r="0.62">
        <stop offset="0" stopColor="#ffdc58" />
        <stop offset="0.65" stopColor="#fcc430" />
        <stop offset="1" stopColor="#eb8f10" />
      </radialGradient>
    </defs>
    <path
      d="M3 39Q4 36 8 36L17 36Q34 22 43 5Q45 0 50 1Q56 3 54 12Q53 21 50 31L64 32Q71 32 72 37Q73 40 71 42Q74 46 71 50Q74 54 70 58Q71 64 65 68L90 70Q95 71 94 76Q93 80 88 80L46 79Q30 78 20 73L7 74Q4 74 3 70Q1 55 3 39Z"
      fill="url(#skin)"
    />
    <path d="M70 42H64M70 50H65M69 58H64M65 68Q60 67 58 65" fill="none" stroke="#e59512" strokeWidth="2" strokeLinecap="round" />
  </svg>
);

/* Chat pieces */

function Bubble({ message }: { message: Message }) {
  const mine = message.from === "me";

  return (
    <li
      className={`relative grid max-w-[90%] rounded-3xl pt-3.5 pr-[18px] pl-[22px] ${
        mine ? "self-end bg-[#144d37] pb-2.5" : "self-start bg-[#1f2629] pb-2"
      } ${message.tail ? (mine ? "rounded-tr-none" : "rounded-tl-none") : ""} ${
        message.tail ? "mt-[22px] first:mt-[18px]" : "mt-1.5"
      } ${message.long ? "w-full" : mine ? "grid-cols-[auto_auto] gap-x-[18px]" : "grid-cols-[auto_auto] gap-x-[30px]"}`}
    >
      {message.tail && (
        <svg
          className={`absolute top-0 h-6 w-4 ${mine ? "left-full" : "right-full -scale-x-100"}`}
          viewBox="0 0 16 24"
          fill={mine ? "#144d37" : "#1f2629"}
          aria-hidden="true"
        >
          <path d="M-1 0H12Q16 1 14 6L3 18Q0 21 0 24H-1Z" />
        </svg>
      )}
      <p
        className={`text-[38px] leading-[45px] text-[#f7f8fa] ${
          message.long ? "col-start-1 row-start-1 pb-1.5" : mine ? "pb-1.5" : "pb-2"
        }`}
      >
        {message.content}
      </p>
      <Stamp time={message.time} mine={mine} long={message.long} />
    </li>
  );
}

function Stamp({ time, mine, long }: { time: string; mine?: boolean; long?: boolean }) {
  return (
    <div className={`flex items-end gap-2 self-end ${long ? "col-start-1 row-start-1 justify-self-end" : ""}`}>
      <time
        className={`text-[29px] leading-[34px] whitespace-nowrap ${mine ? "text-[#9cb5aa]" : "text-[#9da2a4]"}`}
      >
        {time}
      </time>
      {mine && <ChecksIcon />}
    </div>
  );
}

function StatusBar() {
  return (
    <div className="flex h-[148px] shrink-0 items-center justify-between pr-[66px] pl-[67px] text-white">
      <div className="flex items-center gap-[18px]">
        <span className="font-[Lato] text-4xl font-black">5:36</span>
        <MissedCallIcon />
        <TemuIcon />
      </div>
      <div className="flex items-center">
        <MutedIcon />
        <span className="ml-5 text-4xl font-bold">5G</span>
        <span className="ml-2.5">
          <SignalIcon />
        </span>
        <div className="ml-3.5 flex items-center gap-0.5">
          <span className="flex h-[33px] w-[60px] items-center justify-center rounded-[11px] bg-linear-to-r from-white from-63% to-[#8d9092] to-63% text-[28px] font-bold text-[#3b3d3e]">
            59
          </span>
          <span className="h-3.5 w-1 rounded-r bg-[#77797b]" />
        </div>
      </div>
    </div>
  );
}

export default function App() {
  const [draft, setDraft] = useState("");

  return (
    <div className="flex h-screen flex-col overflow-hidden bg-[#0b1014] font-[Roboto,sans-serif]">
      <StatusBar />

      <header className="flex h-[118px] shrink-0 items-center border-b border-[#161c20] pr-[42px] pl-[34px]">
        <button type="button" aria-label="Back">
          <BackIcon />
        </button>
        <div className="ml-[42px] flex size-[77px] items-center justify-center rounded-full bg-[#103529] text-4xl font-medium text-[#25d366]">
          Д
        </div>
        <h1 className="ml-[26px] flex-1 text-[41px] text-[#f7f8fa]">Доставка Кола</h1>
        <div className="flex items-center gap-[63px]">
          <button type="button" aria-label="Video call">
            <VideoIcon />
          </button>
          <button type="button" aria-label="Voice call">
            <PhoneIcon />
          </button>
          <button type="button" aria-label="More options">
            <MenuIcon />
          </button>
        </div>
      </header>

      <main className="relative flex min-h-0 flex-1 flex-col">
        <Wallpaper />

        <div className="relative min-h-0 flex-1 overflow-hidden px-[37px]">
          <p className="mx-12 -mt-1.5 rounded-2xl bg-[#12181c] px-10 pb-3 text-center text-[32px] leading-[38px] text-[#ffd279]">
            Only people in this chat can read, listen to, or share them.{" "}
            <a href="#encryption" className="font-bold">
              Learn more
            </a>
            .
          </p>

          <div className="mt-9 flex flex-col items-end">
            <CallMeHand />
            <div className="mt-[21px] mr-1 flex h-[58px] items-center rounded-full bg-[#144d37] pr-3.5 pb-2 pl-[18px]">
              <Stamp time="6:17 PM" mine />
            </div>
          </div>

          {days.map((day, index) => (
            <section key={index}>
              {day.date && (
                <h2 className="mx-auto mt-[23px] mb-[23px] flex h-[62px] w-fit items-center rounded-2xl bg-[#12181c] px-[18px] text-[29px] font-medium tracking-wide text-[#8d9296]">
                  {day.date}
                </h2>
              )}
              <ul className={day.date ? "-mt-[18px] flex flex-col" : "flex flex-col"}>
                {day.messages.map((message) => (
                  <Bubble key={message.id} message={message} />
                ))}
              </ul>
            </section>
          ))}
        </div>

        <form
          className="relative flex items-center gap-2.5 pt-2 pr-[9px] pb-2.5 pl-2.5"
          onSubmit={(e) => e.preventDefault()}
        >
          <button
            type="button"
            aria-label="Scroll to bottom"
            className="absolute right-[26px] bottom-full mb-[34px] flex size-[68px] items-center justify-center rounded-full bg-[#273137]"
          >
            <svg className="h-7 w-7" viewBox="0 0 28 28" fill="none" stroke="#9da3a7" strokeWidth="4" aria-hidden="true">
              <path d="M3 2 14 12 25 2M3 15 14 25 25 15" />
            </svg>
          </button>

          <div className="flex h-[101px] min-w-0 flex-1 items-center rounded-full bg-[#1f2629] pr-7 pl-7">
            <button type="button" aria-label="Stickers">
              <StickerIcon />
            </button>
            <input
              type="text"
              aria-label="Message"
              placeholder="Message"
              value={draft}
              onChange={(e) => setDraft(e.target.value)}
              className="ml-[30px] min-w-0 flex-1 bg-transparent text-[42px] text-[#f7f8fa] outline-none placeholder:text-[#8d9599]"
            />
            <button type="button" aria-label="Attach">
              <ClipIcon />
            </button>
            <button type="button" aria-label="Camera" className="ml-[68px]">
              <CameraIcon />
            </button>
          </div>
          <button
            type="button"
            aria-label="Record voice message"
            className="flex size-[103px] shrink-0 items-center justify-center rounded-full bg-[#21c063]"
          >
            <MicIcon />
          </button>
        </form>
      </main>

      <div className="flex h-[51px] shrink-0 items-center justify-center">
        <div className="h-2 w-[233px] rounded-full bg-[#e9e9ea]" />
      </div>
    </div>
  );
}
